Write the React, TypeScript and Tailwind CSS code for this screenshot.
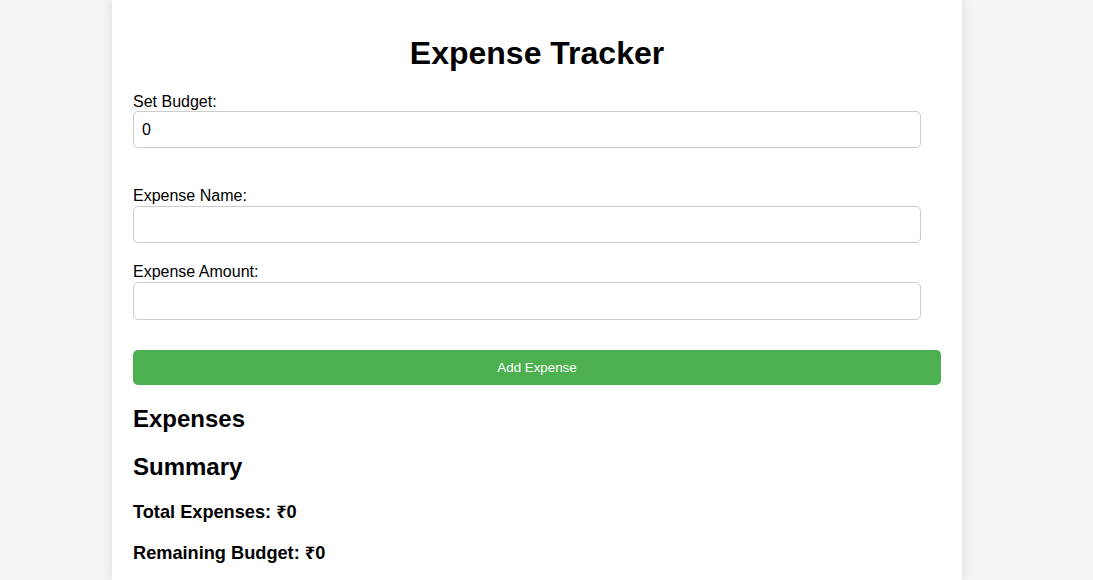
import React, { useState } from 'react';

export default function App() {
  const [budget, setBudget] = useState('0');
  const [name, setName] = useState('');
  const [amount, setAmount] = useState('');

  return (
    <div className="min-h-[580px] bg-[#f4f4f4] pr-[19px] font-['Liberation_Sans',Arial,sans-serif] text-black">
      <div className="mx-auto min-h-[580px] w-[850px] bg-white px-[21px] pt-[35px] shadow-[0_0_10px_rgba(0,0,0,0.1)]">
        <h1 className="text-center text-[32px] font-bold leading-[37px]">Expense Tracker</h1>

        <div className="mt-[21px]">
          <label className="block text-[16px] leading-[18.4px]">Set Budget:</label>
          <input
            type="number"
            value={budget}
            onChange={(e) => setBudget(e.target.value)}
            className="block h-[37px] w-[788px] rounded-[5px] border border-[#ccc] px-[8px] text-[16px] outline-none"
          />
        </div>

        <div className="mt-[39px]">
          <label className="block text-[16px] leading-[18.4px]">Expense Name:</label>
          <input
            type="text"
            value={name}
            onChange={(e) => setName(e.target.value)}
            className="block h-[37px] w-[788px] rounded-[5px] border border-[#ccc] px-[8px] text-[16px] outline-none"
          />
        </div>

        <div className="mt-[20px]">
          <label className="block text-[16px] leading-[18.4px]">Expense Amount:</label>
          <input
            type="number"
            value={amount}
            onChange={(e) => setAmount(e.target.value)}
            className="mt-px block h-[38px] w-[788px] rounded-[5px] border border-[#ccc] px-[8px] text-[16px] outline-none"
          />
        </div>

        <button className="mt-[30px] block h-[35px] w-full rounded-[5px] bg-[#4caf50] text-[13.33px] text-white">
          Add Expense
        </button>

        <h2 className="mt-[20px] text-[24px] font-bold leading-[28px]">Expenses</h2>
        <h2 className="mt-[20px] text-[24px] font-bold leading-[28px]">Summary</h2>
        <h3 className="mt-[19px] text-[18.2px] font-bold leading-[22px]">
          Total Expenses: <span className="font-['Noto_Sans',sans-serif]">₹</span>0
        </h3>
        <h3 className="mt-[18px] text-[18.2px] font-bold leading-[22px]">
          Remaining Budget: <span className="font-['Noto_Sans',sans-serif]">₹</span>0
        </h3>
      </div>
    </div>
  );
}
